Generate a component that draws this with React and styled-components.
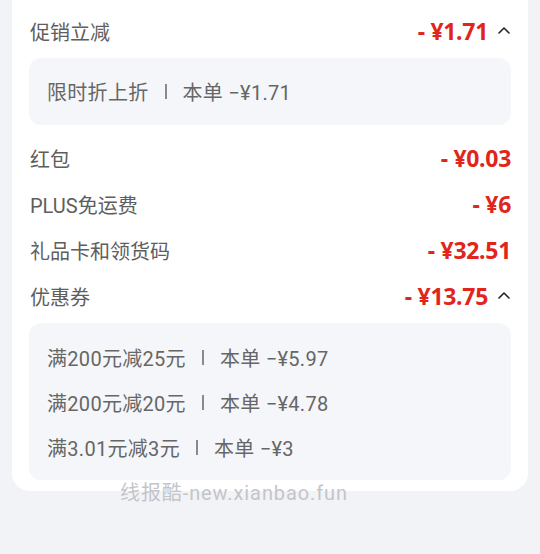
import React from 'react'
import styled, { createGlobalStyle } from 'styled-components'

const GlobalStyle = createGlobalStyle`
  body {
    margin: 0;
    background: #f2f3f7;
    font-family: Roboto, "Noto Sans CJK SC", sans-serif;
  }
`

const discounts = [
  {
    label: '促销立减',
    value: '1.71',
    open: true,
    details: [{ name: '限时折上折', amount: '1.71' }],
  },
  { label: '红包', value: '0.03' },
  { label: 'PLUS免运费', value: '6' },
  { label: '礼品卡和领货码', value: '32.51' },
  {
    label: '优惠券',
    value: '13.75',
    open: true,
    details: [
      { name: '满200元减25元', amount: '5.97' },
      { name: '满200元减20元', amount: '4.78' },
      { name: '满3.01元减3元', amount: '3' },
    ],
  },
]

const Caret = () => (
  <svg width="14" height="10" viewBox="0 0 14 10">
    <polyline
      points="2,8 7,3 12,8"
      fill="none"
      stroke="#222"
      strokeWidth="1.6"
      strokeLinecap="round"
      strokeLinejoin="round"
    />
  </svg>
)

const App = () => (
  <Page>
    <GlobalStyle />
    <Card>
      {discounts.map((d) => (
        <React.Fragment key={d.label}>
          <Row>
            <Label>{d.label}</Label>
            <Value>
              <Amount>- ¥{d.value}</Amount>
              {d.open && (
                <Toggle>
                  <Caret />
                </Toggle>
              )}
            </Value>
          </Row>
          {d.details && (
            <DetailBox single={d.details.length === 1}>
              {d.details.map((item) => (
                <DetailLine key={item.name}>
                  {item.name}
                  <Divider />
                  本单 −¥{item.amount}
                </DetailLine>
              ))}
            </DetailBox>
          )}
        </React.Fragment>
      ))}
    </Card>
    <Watermark>线报酷-new.xianbao.fun</Watermark>
  </Page>
)

export default App

const Page = styled.div`
  position: relative;
  width: 540px;
  height: 554px;
  overflow: hidden;
`

const Card = styled.div`
  margin: 0 12px;
  padding: 8px 17px 11px 17px;
  background: #fff;
  border-radius: 0 0 18px 18px;
`

const Row = styled.div`
  display: flex;
  align-items: center;
  justify-content: space-between;
  height: 46px;
  padding-left: 1px;
`

const Label = styled.span`
  font-size: 20px;
  color: #5e5e5e;
`

const Value = styled.div`
  display: flex;
  align-items: center;
`

const Amount = styled.span`
  font-family: "Noto Sans", "Noto Sans CJK SC", sans-serif;
  font-size: 23px;
  font-weight: 700;
  color: #e1251b;
  letter-spacing: -0.3px;
`

const Toggle = styled.span`
  display: flex;
  width: 23px;
  justify-content: flex-end;
  margin-top: -2px;
`

const DetailBox = styled.div`
  margin: 4px 0 10px;
  padding: ${(p) => (p.single ? '11px 18px' : '12px 18px 10px')};
  background: #f5f6f9;
  border-radius: 12px;

  &:last-child {
    margin-bottom: 0;
  }
`

const DetailLine = styled.div`
  display: flex;
  align-items: center;
  height: 45px;
  font-size: 20px;
  letter-spacing: 0.3px;
  color: #666;
`

const Divider = styled.span`
  display: inline-block;
  width: 2px;
  height: 15px;
  margin: 0 16px;
  background: #8a8a8a;
`

const Watermark = styled.div`
  position: absolute;
  left: 0;
  right: 72px;
  top: 477px;
  text-align: center;
  font-size: 20px;
  letter-spacing: 0.9px;
  color: #c3c5ca;
`
